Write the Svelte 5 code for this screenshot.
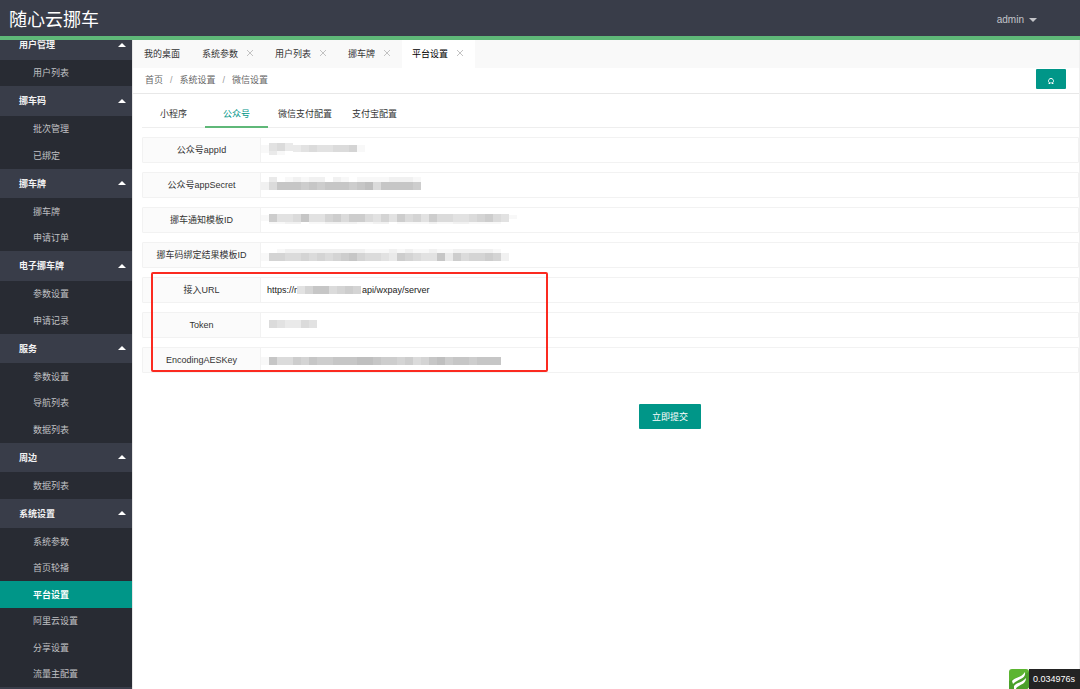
<script lang="ts">
	type Strip = { x: number; y: number; h: number; cells: string };
	type Field = { id: string; label: string; value: string; mask: Strip[] };

	const menu = [
		{ title: '用户管理', items: ['用户列表'] },
		{ title: '挪车码', items: ['批次管理', '已绑定'] },
		{ title: '挪车牌', items: ['挪车牌', '申请订单'] },
		{ title: '电子挪车牌', items: ['参数设置', '申请记录'] },
		{ title: '服务', items: ['参数设置', '导航列表', '数据列表'] },
		{ title: '周边', items: ['数据列表'] },
		{
			title: '系统设置',
			items: ['系统参数', '首页轮播', '平台设置', '阿里云设置', '分享设置', '流量主配置']
		}
	];

	const pages = ['系统参数', '用户列表', '挪车牌', '平台设置'];
	const sections = ['小程序', '公众号', '微信支付配置', '支付宝配置'];

	let currentPage = $state('平台设置');
	let currentSection = $state('公众号');

	// each digit in cells is the darkness of one 8px block
	const fields: Field[] = [
		{
			id: 'appid',
			label: '公众号appId',
			value: '',
			mask: [
				{ x: 0, y: 8, h: 8, cells: '1' },
				{ x: 8, y: 6, h: 8, cells: '453' },
				{ x: 8, y: 14, h: 4, cells: '31' },
				{ x: 32, y: 8, h: 7, cells: '34544556' },
				{ x: 96, y: 8, h: 7, cells: '1' }
			]
		},
		{
			id: 'secret',
			label: '公众号appSecret',
			value: '',
			mask: [
				{ x: 8, y: 5, h: 5, cells: '3012122021011112221' },
				{ x: 0, y: 10, h: 8, cells: '25888787888789588887' }
			]
		},
		{
			id: 'notice',
			label: '挪车通知模板ID',
			value: '',
			mask: [
				{ x: 0, y: 8, h: 6, cells: '1' },
				{ x: 8, y: 7, h: 8, cells: '744584467577546475647554456754' },
				{ x: 8, y: 15, h: 2, cells: '112201122221122011112112211110' },
				{ x: 248, y: 8, h: 4, cells: '1' }
			]
		},
		{
			id: 'bind',
			label: '挪车码绑定结果模板ID',
			value: '',
			mask: [
				{ x: 16, y: 7, h: 4, cells: '1222222222211121211211222221' },
				{ x: 0, y: 11, h: 8, cells: '1665565656786554376544837566762' }
			]
		},
		{
			id: 'url',
			label: '接入URL',
			value: 'https://r' + '\u00a0'.repeat(26) + 'api/wxpay/server',
			mask: [{ x: 36, y: 9, h: 8, cells: '46885676' }]
		},
		{
			id: 'token',
			label: 'Token',
			value: '',
			mask: [{ x: 8, y: 8, h: 8, cells: '543354' }]
		},
		{
			id: 'aes',
			label: 'EncodingAESKey',
			value: '',
			mask: [{ x: 0, y: 10, h: 8, cells: '185576877888998776756897887888' }]
		}
	];
</script>

<div class="layout">
	<header class="header">
		<h1>随心云挪车</h1>
		<button class="user">admin <span class="caret"></span></button>
	</header>

	<div class="body">
		<aside class="side">
			<nav>
				{#each menu as group (group.title)}
					<button class="group">{group.title}<span class="arrow"></span></button>
					{#each group.items as item}
						<a href="#/" class="item" class:active={item === '平台设置'}>{item}</a>
					{/each}
				{/each}
			</nav>
		</aside>

		<main class="main">
			<div class="pages">
				<button class="page home">我的桌面</button>
				{#each pages as page (page)}
					<button
						class="page"
						class:current={page === currentPage}
						onclick={() => (currentPage = page)}
					>
						{page}
						<svg class="close" viewBox="0 0 10 10">
							<path d="M2 2l6 6M8 2l-6 6" />
						</svg>
					</button>
				{/each}
			</div>

			<div class="crumbs">
				<div class="path">
					<a href="#/">首页</a><i>/</i><a href="#/">系统设置</a><i>/</i><span>微信设置</span>
				</div>
				<button class="refresh" aria-label="刷新">
					<svg viewBox="0 0 8 8">
						<path d="M2.9 6.2A2.5 2.5 0 1 1 5.1 6.2M1.6 6.5h1.5V5.2M6.4 6.5H4.9V5.2" />
					</svg>
				</button>
			</div>

			<div class="content">
				<div class="sections">
					{#each sections as section (section)}
						<button
							class="section"
							class:current={section === currentSection}
							onclick={() => (currentSection = section)}>{section}</button
						>
					{/each}
				</div>

				<form class="form">
					{#each fields as field (field.id)}
						<div class="row">
							<label for={field.id}>{field.label}</label>
							<div class="value">
								<input id={field.id} type="text" value={field.value} />
								<svg class="mask" width="280" height="24" shape-rendering="crispEdges">
									{#each field.mask as strip}
										{#each strip.cells as cell, i}
											<rect
												x={strip.x + i * 8}
												y={strip.y - 1}
												width="8"
												height={strip.h}
												fill-opacity={Number(cell) * 0.028}
											/>
										{/each}
									{/each}
								</svg>
							</div>
						</div>
					{/each}
					<div class="highlight"></div>
					<div class="actions">
						<button type="button" class="submit">立即提交</button>
					</div>
				</form>
			</div>
		</main>
	</div>

	<div class="trace">
		<svg viewBox="0 0 20 20">
			<rect width="20" height="20" rx="3" fill="#5cb531" />
			<path d="M0 12L20 3V17a3 3 0 0 1-3 3H0z" fill="#4ba02a" />
			<path
				d="M3 12C6 8 12 9 16 3C17 9 11 10 8 12C6 13 5 14 4 15zM5 17C8 13 13 14 17 9C17 14 13 15 10 17C8 18 7 19 7 20H5z"
				fill="#fff"
			/>
		</svg>
		<span>0.034976s</span>
	</div>
</div>

<style>
	:global(body) {
		margin: 0;
		background: #fff;
		overflow: hidden;
	}

	.layout {
		display: flex;
		flex-direction: column;
		height: 100vh;
		font-family: 'Liberation Sans', 'Noto Sans CJK SC', sans-serif;
		font-size: 9px;
		color: #333;
	}

	button,
	input {
		font: inherit;
		color: inherit;
		border: 0;
		margin: 0;
		padding: 0;
		background: none;
	}

	button {
		cursor: pointer;
	}

	a {
		color: inherit;
		text-decoration: none;
	}

	.header {
		display: flex;
		align-items: center;
		justify-content: space-between;
		box-sizing: border-box;
		height: 40px;
		flex: none;
		padding: 0 43px 0 9px;
		background: #393d49;
		border-bottom: 4px solid #5fb878;
		position: relative;
		z-index: 1;
	}

	h1 {
		margin: 0;
		font-size: 18px;
		font-weight: 400;
		color: #fff;
	}

	.user {
		display: flex;
		align-items: center;
		gap: 5px;
		padding-top: 3px;
		font-size: 10px;
		color: #c4c5c9;
	}

	.caret {
		border: 4px solid transparent;
		border-top-color: #c4c5c9;
		border-bottom: 0;
	}

	.body {
		display: flex;
		flex: 1;
		min-height: 0;
	}

	.side {
		width: 132px;
		flex: none;
		overflow: hidden;
		background: #393d49;
	}

	/* scrolled a little, so the first heading sits partly under the header */
	nav {
		display: flex;
		flex-direction: column;
		min-height: calc(100% + 8px);
		margin-top: -10px;
	}

	.group {
		display: flex;
		align-items: center;
		justify-content: space-between;
		flex: 1 0 29px;
		padding: 0 6px 0 19px;
		font-weight: 700;
		color: #f2f2f3;
		background: #393d49;
	}

	.arrow {
		border: 4px solid transparent;
		border-bottom-color: #fff;
		border-top: 0;
	}

	.item {
		display: flex;
		align-items: center;
		flex: 1 0 26px;
		padding-left: 33px;
		color: #c0c1c4;
		background: #282b33;
	}

	.item.active {
		color: #fff;
		font-weight: 700;
		background: #009688;
	}

	.main {
		flex: 1;
		min-width: 0;
		border-left: 1px solid #e6e6e6;
		border-right: 1px solid #f0f0f0;
	}

	.pages {
		display: flex;
		height: 28px;
		background: #f9f9f9;
	}

	.page {
		display: flex;
		align-items: center;
		gap: 7px;
		padding: 0 10px 2px;
	}

	.page.home {
		padding: 0 12px 2px 11px;
	}

	.page.current {
		background: #fff;
		color: #000;
	}

	.close {
		width: 10px;
		height: 10px;
		fill: none;
		stroke: #c2c2c2;
	}

	.crumbs {
		display: flex;
		align-items: center;
		justify-content: space-between;
		height: 25px;
		padding: 0 13px 0 12px;
		border-bottom: 1px solid #e8e8e8;
		color: #666;
	}

	.path {
		padding-bottom: 2px;
	}

	.path i {
		margin: 0 7px;
		font-style: normal;
		color: #999;
	}

	.refresh {
		display: flex;
		align-items: center;
		justify-content: center;
		width: 30px;
		height: 20px;
		margin-bottom: 3px;
		padding-top: 4px;
		border-radius: 1px;
		background: #009688;
	}

	.refresh svg {
		width: 8px;
		height: 8px;
		fill: none;
		stroke: #fff;
	}

	.content {
		padding-left: 9px;
	}

	.sections {
		display: flex;
		height: 27px;
		padding-top: 6px;
		border-bottom: 1px solid #eee;
	}

	.section {
		min-width: 63px;
		height: 28px;
		padding: 0 10px;
		border-bottom: 2px solid transparent;
	}

	.section.current {
		color: #009688;
		border-bottom-color: #5fb878;
	}

	.form {
		display: flex;
		flex-direction: column;
		gap: 9px;
		padding-top: 9px;
		position: relative;
	}

	.row {
		display: flex;
		box-sizing: border-box;
		height: 26px;
		border: 1px solid #f2f2f2;
		border-radius: 1px;
	}

	.row label {
		width: 117px;
		flex: none;
		line-height: 24px;
		text-align: center;
		white-space: nowrap;
		background: #fbfbfb;
		border-right: 1px solid #f2f2f2;
	}

	.value {
		position: relative;
		flex: 1;
	}

	.value input {
		box-sizing: border-box;
		width: 100%;
		height: 24px;
		padding: 0 6px;
		outline: none;
		color: #222;
	}

	.mask {
		position: absolute;
		left: 0;
		top: 0;
		pointer-events: none;
	}

	.highlight {
		position: absolute;
		left: 9px;
		top: 144px;
		box-sizing: border-box;
		width: 397px;
		height: 100px;
		border: 2px solid #fb2a20;
		border-radius: 2px;
		pointer-events: none;
	}

	.actions {
		display: flex;
		justify-content: center;
		margin-left: 119px;
		padding-top: 22px;
	}

	.submit {
		width: 62px;
		height: 25px;
		border-radius: 1px;
		color: #fff;
		background: #009688;
	}

	.trace {
		position: fixed;
		right: 0;
		bottom: 0;
		display: flex;
		height: 20px;
		z-index: 2;
	}

	.trace svg {
		width: 20px;
		height: 20px;
	}

	.trace span {
		padding: 0 5px 0 4px;
		line-height: 20px;
		color: #fff;
		background: #232323;
	}
</style>
